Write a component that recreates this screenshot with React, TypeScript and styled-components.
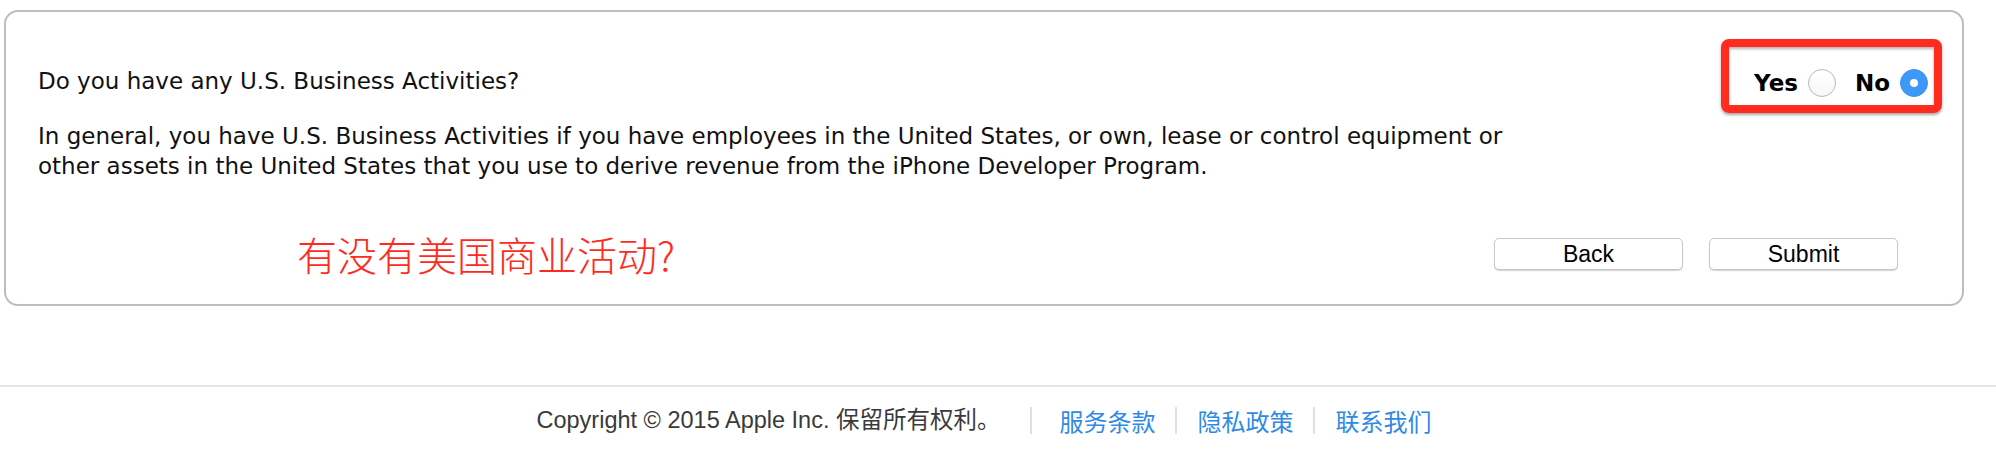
import React from "react";
import styled, { createGlobalStyle } from "styled-components";

const GlobalStyle = createGlobalStyle`
  html, body {
    margin: 0;
    padding: 0;
    background: #ffffff;
  }
  * { box-sizing: border-box; }
`;

const Page = styled.div`
  width: 1996px;
  height: 470px;
  overflow: hidden;
  background: #fff;
`;

const CardWrap = styled.div`
  padding: 10px 32px 0 4px;
`;

const Card = styled.section`
  border: 2px solid #bdbdbd;
  border-radius: 14px;
  padding: 53px 34px 30px 32px;
  font-family: "DejaVu Sans", sans-serif;
  color: #111;
`;

const HeaderRow = styled.div`
  display: flex;
  align-items: center;
  justify-content: space-between;
`;

const Question = styled.h2`
  margin: 0;
  font-size: 23px;
  line-height: 30px;
  font-weight: normal;
`;

const Paragraph = styled.p`
  margin: 24px 0 0;
  font-size: 23px;
  line-height: 30px;
`;

const RadioGroup = styled.div`
  position: relative;
  display: flex;
  align-items: center;
  padding-top: 4px;
`;

const Highlight = styled.div`
  position: absolute;
  top: -26px;
  right: -14px;
  bottom: -16px;
  left: -33px;
  border: 8px solid #ff2b1e;
  border-radius: 8px;
  box-shadow: 0 2px 3px rgba(0, 0, 0, 0.35), inset 0 2px 3px rgba(0, 0, 0, 0.3);
  pointer-events: none;
`;

const Choice = styled.label`
  display: flex;
  align-items: center;
  font-size: 23px;
  font-weight: bold;
  line-height: 28px;
  color: #000;
  & + & {
    margin-left: 19px;
  }
`;

const RadioDot = styled.span<{ $checked?: boolean }>`
  display: inline-flex;
  align-items: center;
  justify-content: center;
  width: 28px;
  height: 28px;
  margin-left: 10px;
  border-radius: 50%;
  border: 1px solid ${(p) => (p.$checked ? "#3a93f2" : "#b8b8b8")};
  background: ${(p) =>
    p.$checked ? "#3d98f8" : "linear-gradient(#ffffff, #f8f8f8)"};
  &::after {
    content: "";
    display: ${(p) => (p.$checked ? "block" : "none")};
    width: 8px;
    height: 8px;
    border-radius: 50%;
    background: #fff;
  }
`;

const BottomRow = styled.div`
  display: flex;
  align-items: center;
  margin-top: 53px;
  height: 40px;
`;

const Annotation = styled.span`
  margin-left: 259px;
  font-family: "Noto Sans CJK SC", sans-serif;
  font-size: 40px;
  line-height: 40px;
  color: #ff2a1e;
  font-weight: 300;
`;

const Actions = styled.div`
  display: flex;
  gap: 26px;
  margin-left: auto;
  margin-right: 30px;
`;

const Button = styled.button`
  width: 189px;
  height: 32px;
  padding: 0;
  border: 1px solid #c9c9c9;
  border-radius: 5px;
  background: #fff;
  box-shadow: 0 1px 1px rgba(0, 0, 0, 0.18);
  font-family: "Liberation Sans", Arial, sans-serif;
  font-size: 23px;
  line-height: 30px;
  color: #000;
`;

const Footer = styled.footer`
  margin-top: 79px;
  border-top: 2px solid #e6e6e6;
  padding: 20px 28px 0 0;
  display: flex;
  justify-content: center;
  align-items: center;
  font-family: "Liberation Sans", "Noto Sans CJK SC", sans-serif;
  font-size: 23.5px;
  color: #3a3a3a;
`;

const Copy = styled.span`
  line-height: 27px;
`;

const Sep = styled.span<{ $first?: boolean }>`
  width: 2px;
  height: 27px;
  background: #e0e0e0;
  margin: ${(p) => (p.$first ? "0 28px 0 29px" : "0 21px 0 19px")};
`;

const FooterLink = styled.a`
  color: #2f8ae6;
  text-decoration: none;
  line-height: 27px;
  font-size: 24px;
  font-family: "Noto Sans CJK SC", sans-serif;
`;

export default function App() {
  return (
    <Page>
      <GlobalStyle />
      <CardWrap>
        <Card>
          <HeaderRow>
            <Question>Do you have any U.S. Business Activities?</Question>
            <RadioGroup>
              <Choice>
                Yes
                <RadioDot />
              </Choice>
              <Choice>
                No
                <RadioDot $checked />
              </Choice>
              <Highlight />
            </RadioGroup>
          </HeaderRow>
          <Paragraph>
            In general, you have U.S. Business Activities if you have employees in the United States, or own, lease or control equipment or
            <br />
            other assets in the United States that you use to derive revenue from the iPhone Developer Program.
          </Paragraph>
          <BottomRow>
            <Annotation>有没有美国商业活动?</Annotation>
            <Actions>
              <Button>Back</Button>
              <Button>Submit</Button>
            </Actions>
          </BottomRow>
        </Card>
      </CardWrap>
      <Footer>
        <Copy>Copyright © 2015 Apple Inc. 保留所有权利。</Copy>
        <Sep $first />
        <FooterLink href="#">服务条款</FooterLink>
        <Sep />
        <FooterLink href="#">隐私政策</FooterLink>
        <Sep />
        <FooterLink href="#">联系我们</FooterLink>
      </Footer>
    </Page>
  );
}
